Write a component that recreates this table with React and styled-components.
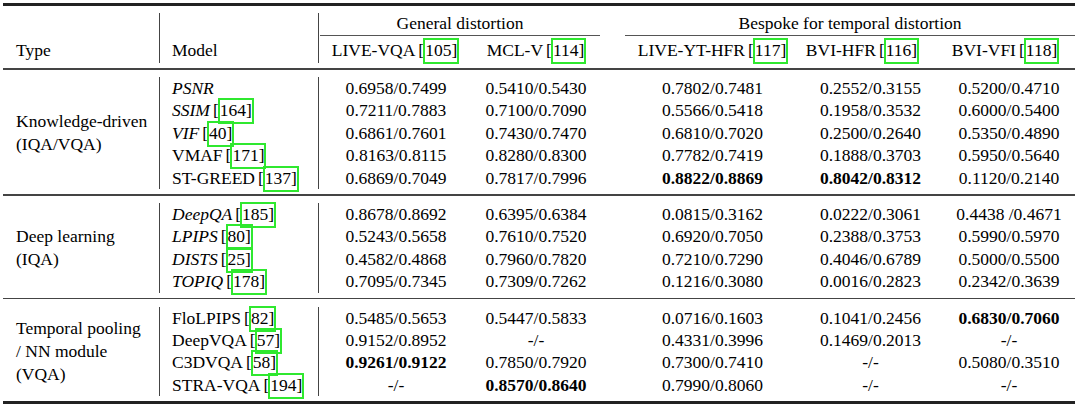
import React from "react";
import styled, { createGlobalStyle } from "styled-components";

const GlobalStyle = createGlobalStyle`
  html, body {
    margin: 0;
    background: #fff;
  }
  body {
    font-family: "Liberation Serif", "Times New Roman", serif;
    color: #000;
  }
`;

const COLS = [
  { name: "LIVE-VQA", ref: 105, width: 154, pl: 2, pr: 0, hpl: 0, hpr: 0 },
  { name: "MCL-V", ref: 114, width: 140, pl: 0, pr: 12, hpl: 0, hpr: 12 },
  { name: "LIVE-YT-HFR", ref: 117, width: 184, pl: 17, pr: 0, hpl: 17, hpr: 0 },
  { name: "BVI-HFR", ref: 116, width: 139, pl: 10, pr: 0, hpl: 0, hpr: 7 },
  { name: "BVI-VFI", ref: 118, width: 140, pl: 8, pr: 0, hpl: 0, hpr: 0 },
];

// leading "*" = bold value
const GROUPS = [
  {
    type: ["Knowledge-driven", "(IQA/VQA)"],
    rows: [
      { name: "PSNR", italic: true, values: ["0.6958/0.7499", "0.5410/0.5430", "0.7802/0.7481", "0.2552/0.3155", "0.5200/0.4710"] },
      { name: "SSIM", italic: true, ref: 164, values: ["0.7211/0.7883", "0.7100/0.7090", "0.5566/0.5418", "0.1958/0.3532", "0.6000/0.5400"] },
      { name: "VIF", italic: true, ref: 40, values: ["0.6861/0.7601", "0.7430/0.7470", "0.6810/0.7020", "0.2500/0.2640", "0.5350/0.4890"] },
      { name: "VMAF", ref: 171, values: ["0.8163/0.8115", "0.8280/0.8300", "0.7782/0.7419", "0.1888/0.3703", "0.5950/0.5640"] },
      { name: "ST-GREED", ref: 137, values: ["0.6869/0.7049", "0.7817/0.7996", "*0.8822/0.8869", "*0.8042/0.8312", "0.1120/0.2140"] },
    ],
  },
  {
    type: ["Deep learning", "(IQA)"],
    rows: [
      { name: "DeepQA", italic: true, ref: 185, values: ["0.8678/0.8692", "0.6395/0.6384", "0.0815/0.3162", "0.0222/0.3061", "0.4438 /0.4671"] },
      { name: "LPIPS", italic: true, ref: 80, values: ["0.5243/0.5658", "0.7610/0.7520", "0.6920/0.7050", "0.2388/0.3753", "0.5990/0.5970"] },
      { name: "DISTS", italic: true, ref: 25, values: ["0.4582/0.4868", "0.7960/0.7820", "0.7210/0.7290", "0.4046/0.6789", "0.5000/0.5500"] },
      { name: "TOPIQ", italic: true, ref: 178, values: ["0.7095/0.7345", "0.7309/0.7262", "0.1216/0.3080", "0.0016/0.2823", "0.2342/0.3639"] },
    ],
  },
  {
    type: ["Temporal pooling", "/ NN module", "(VQA)"],
    rows: [
      { name: "FloLPIPS", ref: 82, values: ["0.5485/0.5653", "0.5447/0.5833", "0.0716/0.1603", "0.1041/0.2456", "*0.6830/0.7060"] },
      { name: "DeepVQA", ref: 57, values: ["0.9152/0.8952", "-/-", "0.4331/0.3996", "0.1469/0.2013", "-/-"] },
      { name: "C3DVQA", ref: 58, values: ["*0.9261/0.9122", "0.7850/0.7920", "0.7300/0.7410", "-/-", "0.5080/0.3510"] },
      { name: "STRA-VQA", ref: 194, values: ["-/-", "*0.8570/0.8640", "0.7990/0.8060", "-/-", "-/-"] },
    ],
  },
];

const Page = styled.div`
  padding: 3px 0 0 3px;
`;

const Table = styled.table`
  width: 1072px;
  table-layout: fixed;
  border-collapse: separate;
  border-spacing: 0;
  font-size: 17.5px;
`;

const RuleCell = styled.td`
  padding: ${p => p.$above}px 0 ${p => p.$below}px 0;
`;

const Line = styled.div`
  height: ${p => p.$h}px;
  background: ${p => p.$color};
`;

const HeadCell = styled.th`
  padding: 0 ${p => p.$pr || 0}px 0 ${p => p.$pl || 0}px;
  height: ${p => p.$h}px;
  line-height: ${p => p.$h}px;
  font-weight: normal;
  text-align: ${p => p.$align || "center"};
  vertical-align: top;
  white-space: nowrap;
  box-shadow: ${p => (p.$rule ? "inset 1px 0 0 #444" : "none")};
`;

const GroupTitle = styled.div`
  line-height: 21px;
  padding-bottom: 1px;
  margin: 0 ${p => p.$trimR}px 0 ${p => p.$trimL}px;
  border-bottom: 1px solid #555;
`;

const TypeCell = styled.td`
  padding: 0 0 0 13px;
  text-align: left;
  vertical-align: middle;
  line-height: 22.7px;
  white-space: nowrap;
`;

const ModelCell = styled.td`
  padding: 0 0 0 13px;
  height: 22.4px;
  line-height: 22.4px;
  text-align: left;
  white-space: nowrap;
  box-shadow: inset 1px 0 0 #444;
`;

const ModelName = styled.span`
  font-style: ${p => (p.$italic ? "italic" : "normal")};
`;

const ValueCell = styled.td`
  padding: 0 ${p => p.$pr}px 0 ${p => p.$pl}px;
  height: 22.4px;
  line-height: 22.4px;
  text-align: center;
  white-space: nowrap;
  font-weight: ${p => (p.$bold ? "bold" : "normal")};
  box-shadow: ${p => (p.$rule ? "inset 1px 0 0 #444" : "none")};
`;

const RefWrap = styled.span`
  margin-left: 3px;
`;

const CiteBox = styled.span`
  border: 2px solid #2fe82f;
  padding-bottom: 2px;
  margin: 0 -1px;
`;

function Ref({ n }) {
  return (
    <RefWrap>
      [<CiteBox>{n}]</CiteBox>
    </RefWrap>
  );
}

function Rule({ above, below, h, color }) {
  return (
    <tr>
      <RuleCell colSpan={7} $above={above} $below={below}>
        <Line $h={h} $color={color} />
      </RuleCell>
    </tr>
  );
}

export default function App() {
  return (
    <>
      <GlobalStyle />
      <Page>
        <Table>
          <colgroup>
            <col style={{ width: 156 }} />
            <col style={{ width: 159 }} />
            {COLS.map(c => (
              <col key={c.name} style={{ width: c.width }} />
            ))}
          </colgroup>
          <thead>
            <Rule above={0} below={7} h={3} color="#222" />
            <tr>
              <HeadCell $h={24} />
              <HeadCell $h={24} $rule />
              <HeadCell $h={24} colSpan={2} $rule>
                <GroupTitle $trimL={2} $trimR={12}>General distortion</GroupTitle>
              </HeadCell>
              <HeadCell $h={24} colSpan={3}>
                <GroupTitle $trimL={13} $trimR={0}>Bespoke for temporal distortion</GroupTitle>
              </HeadCell>
            </tr>
            <tr>
              <HeadCell $h={26} $align="left" $pl={13}>Type</HeadCell>
              <HeadCell $h={26} $align="left" $pl={13} $rule>Model</HeadCell>
              {COLS.map((c, i) => (
                <HeadCell key={c.name} $h={26} $pl={c.hpl} $pr={c.hpr} $rule={i === 0}>
                  {c.name}
                  <Ref n={c.ref} />
                </HeadCell>
              ))}
            </tr>
          </thead>
          <tbody>
            {GROUPS.map((g, gi) => (
              <React.Fragment key={gi}>
                <Rule above={5} below={7.5} h={1.5} color="#444" />
                {g.rows.map((r, ri) => (
                  <tr key={r.name}>
                    {ri === 0 && (
                      <TypeCell rowSpan={g.rows.length}>
                        {g.type.map((t, ti) => (
                          <React.Fragment key={ti}>
                            {ti > 0 && <br />}
                            {t}
                          </React.Fragment>
                        ))}
                      </TypeCell>
                    )}
                    <ModelCell>
                      <ModelName $italic={r.italic}>{r.name}</ModelName>
                      {r.ref && <Ref n={r.ref} />}
                    </ModelCell>
                    {r.values.map((v, vi) => {
                      const bold = v.startsWith("*");
                      return (
                        <ValueCell
                          key={vi}
                          $bold={bold}
                          $pl={COLS[vi].pl}
                          $pr={COLS[vi].pr}
                          $rule={vi === 0}
                        >
                          {bold ? v.slice(1) : v}
                        </ValueCell>
                      );
                    })}
                  </tr>
                ))}
              </React.Fragment>
            ))}
            <Rule above={5} below={0} h={3} color="#222" />
          </tbody>
        </Table>
      </Page>
    </>
  );
}
